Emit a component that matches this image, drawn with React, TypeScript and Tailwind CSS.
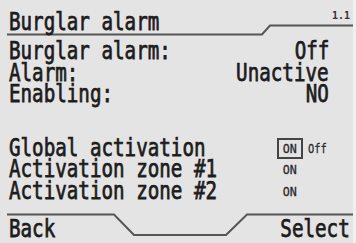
import React from 'react';

const T: React.FC<{ children: React.ReactNode; right?: boolean }> = ({ children, right }) => (
    <span className={`inline-block scale-x-[0.8] whitespace-pre ${right ? 'origin-right' : 'origin-left'}`}>{children}</span>
);

const Row: React.FC<{ label: string; value?: string; children?: React.ReactNode }> = ({ label, value, children }) => (
    <div className="flex items-center justify-between h-[21.5px] leading-[21.5px]">
        <T>{label}</T>
        {value !== undefined ? <T right>{value}</T> : <div className="w-[52px] flex items-center">{children}</div>}
    </div>
);

const Toggle: React.FC<{ boxed?: boolean; showOff?: boolean }> = ({ boxed, showOff }) => (
    <div className="flex items-center gap-[5px] text-[13px] leading-none text-[#2a2a2a] [-webkit-text-stroke:0.3px_#2a2a2a]">
        <span
            className={
                boxed
                    ? 'w-[26px] h-[21px] border-2 border-[#444] flex items-center justify-center'
                    : 'w-[26px] flex items-center justify-center'
            }
        >
            <span className="inline-block scale-x-[0.9]">ON</span>
        </span>
        {showOff && <span className="inline-block scale-x-[0.8] origin-left">Off</span>}
    </div>
);

export default function App() {
    return (
        <div
            className="w-[356px] h-[243px] bg-[#e4e4e4] text-[#1c1c1c] text-[24px] flex flex-col overflow-hidden border-r-[3px] border-r-[#f0f0f0] [-webkit-text-stroke:0.75px_#1c1c1c]"
            style={{ fontFamily: '"DejaVu Sans Mono", "Liberation Mono", monospace' }}
        >
            {/* header */}
            <div className="relative h-[36px] shrink-0 flex items-end justify-between pl-[9px] pr-[3px]">
                <svg className="absolute inset-0" width="356" height="36" viewBox="0 0 356 36" fill="none">
                    <path d="M7 34.5 H262 L270 25.5 H353" stroke="#555" strokeWidth="2" />
                </svg>
                <div className="h-[22px] leading-[22px] mb-[3px]">
                    <T>Burglar alarm</T>
                </div>
                <span className="self-start mt-[11px] text-[10px] leading-none text-[#333] font-bold [-webkit-text-stroke:0]">1.1</span>
            </div>

            {/* status */}
            <div className="mt-[5px] pl-[9px] pr-[24px]">
                <Row label="Burglar alarm:" value="Off" />
                <Row label="Alarm:" value="Unactive" />
                <Row label="Enabling:" value="NO" />
            </div>

            {/* zones */}
            <div className="mt-[32px] pl-[9px] pr-[24px]">
                <Row label="Global activation">
                    <Toggle boxed showOff />
                </Row>
                <Row label="Activation zone #1">
                    <Toggle />
                </Row>
                <Row label="Activation zone #2">
                    <Toggle />
                </Row>
            </div>

            {/* footer */}
            <div className="relative mt-auto h-[31px] shrink-0 flex items-end justify-between pl-[9px] pr-[3px]">
                <svg className="absolute inset-0" width="356" height="31" viewBox="0 0 356 31" fill="none">
                    <path d="M7 2.5 H114 L134 23 H226 L247 2.5 H353" stroke="#555" strokeWidth="2" />
                </svg>
                <div className="h-[22px] leading-[22px] mb-[3px]">
                    <T>Back</T>
                </div>
                <div className="h-[22px] leading-[22px] mb-[3px]">
                    <T right>Select</T>
                </div>
            </div>
        </div>
    );
}
